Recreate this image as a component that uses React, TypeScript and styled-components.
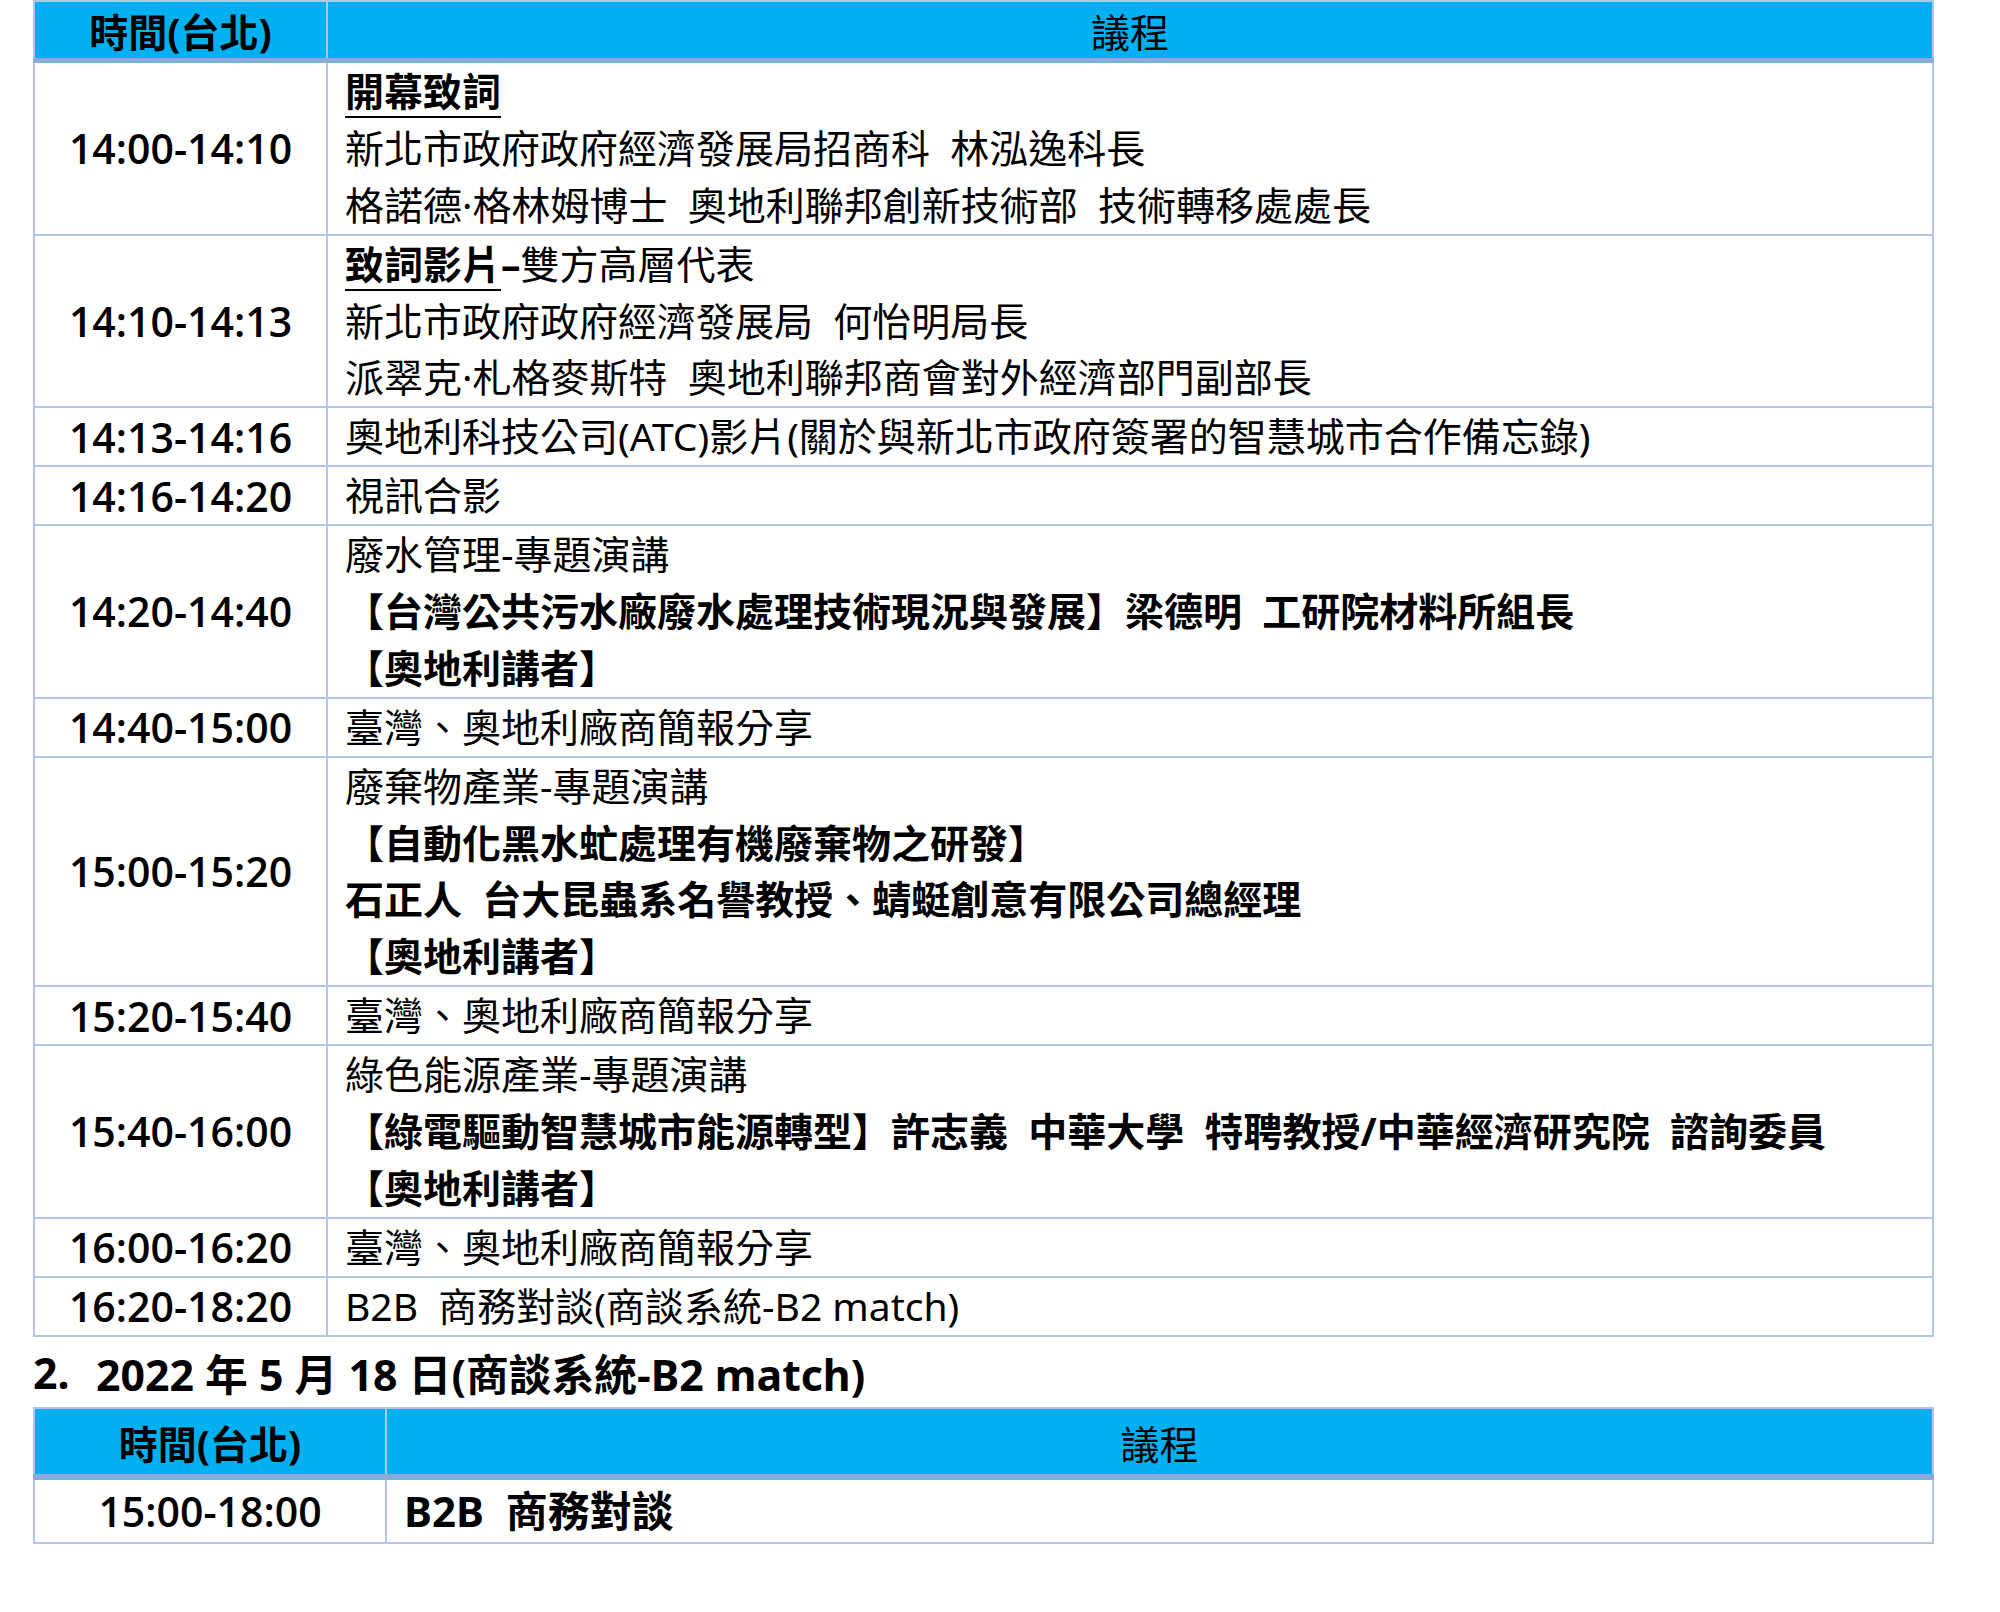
import React from 'react';
import styled, { createGlobalStyle } from 'styled-components';

const GlobalStyle = createGlobalStyle`
  html, body { margin: 0; padding: 0; background: #ffffff; }
  body {
    font-family: "Noto Sans", "Noto Sans CJK TC", sans-serif;
    color: #000000;
  }
`;

const Page = styled.div`
  padding-left: 33px;
  width: 1901px;
`;

const Table = styled.table`
  width: 1901px;
  border-collapse: collapse;
  table-layout: fixed;
`;

const HeadCell = styled.th<{ $bold?: boolean; $h: number; $bar: number }>`
  background: #00b0f0;
  border: 2px solid #b4c6e7;
  border-bottom: ${(p) => p.$bar}px solid #8eaadb;
  height: ${(p) => p.$h}px;
  padding: 4px 0 0 0;
  font-size: 39px;
  line-height: ${(p) => p.$h}px;
  font-weight: ${(p) => (p.$bold ? 700 : 400)};
  text-align: center;
  vertical-align: middle;
`;

const TimeCell = styled.td<{ $size?: number }>`
  border: 2px solid #b4c6e7;
  padding: 0;
  text-align: center;
  vertical-align: middle;
  font-family: "Open Sans", "Noto Sans", sans-serif;
  font-weight: 600;
  font-size: ${(p) => p.$size ?? 41}px;
`;

const AgendaCell = styled.td<{ $bold?: boolean; $size?: number }>`
  border: 2px solid #b4c6e7;
  padding: 0 0 0 17px;
  vertical-align: middle;
  font-size: ${(p) => p.$size ?? 39}px;
  font-weight: ${(p) => (p.$bold ? 700 : 400)};
`;

const Line = styled.div<{ $h?: number }>`
  white-space: pre;
  line-height: ${(p) => p.$h ?? 56.9}px;
  height: ${(p) => p.$h ?? 56.9}px;
`;

const Title = styled.span`
  font-weight: 700;
  text-decoration: underline;
  text-decoration-thickness: 2px;
  text-underline-offset: 10px;
`;

const Strong = styled.span`
  font-weight: 700;
`;

const Heading = styled.div`
  display: flex;
  align-items: center;
  height: 70px;
  padding-top: 2px;
  box-sizing: border-box;
  font-size: 42.8px;
  font-weight: 700;
  white-space: pre;
`;

const HeadingNum = styled.span`
  width: 63px;
`;

type Row = { time: string; lines: React.ReactNode[] };

const rows: Row[] = [
  {
    time: '14:00-14:10',
    lines: [
      <Title key="t">開幕致詞</Title>,
      '新北市政府政府經濟發展局招商科  林泓逸科長',
      '格諾德·格林姆博士  奧地利聯邦創新技術部  技術轉移處處長',
    ],
  },
  {
    time: '14:10-14:13',
    lines: [
      <>
        <Title>致詞影片</Title>
        <Strong>–</Strong>雙方高層代表
      </>,
      '新北市政府政府經濟發展局  何怡明局長',
      '派翠克·札格麥斯特  奧地利聯邦商會對外經濟部門副部長',
    ],
  },
  {
    time: '14:13-14:16',
    lines: ['奧地利科技公司(ATC)影片(關於與新北市政府簽署的智慧城市合作備忘錄)'],
  },
  { time: '14:16-14:20', lines: ['視訊合影'] },
  {
    time: '14:20-14:40',
    lines: [
      '廢水管理-專題演講',
      <Strong key="b">【台灣公共污水廠廢水處理技術現況與發展】梁德明  工研院材料所組長</Strong>,
      <Strong key="c">【奧地利講者】</Strong>,
    ],
  },
  { time: '14:40-15:00', lines: ['臺灣、奧地利廠商簡報分享'] },
  {
    time: '15:00-15:20',
    lines: [
      '廢棄物產業-專題演講',
      <Strong key="b">【自動化黑水虻處理有機廢棄物之研發】</Strong>,
      <Strong key="c">石正人  台大昆蟲系名譽教授、蜻蜓創意有限公司總經理</Strong>,
      <Strong key="d">【奧地利講者】</Strong>,
    ],
  },
  { time: '15:20-15:40', lines: ['臺灣、奧地利廠商簡報分享'] },
  {
    time: '15:40-16:00',
    lines: [
      '綠色能源產業-專題演講',
      <Strong key="b">【綠電驅動智慧城市能源轉型】許志義  中華大學  特聘教授/中華經濟研究院  諮詢委員</Strong>,
      <Strong key="c">【奧地利講者】</Strong>,
    ],
  },
  { time: '16:00-16:20', lines: ['臺灣、奧地利廠商簡報分享'] },
  { time: '16:20-18:20', lines: ['B2B  商務對談(商談系統-B2 match)'] },
];

export default function App() {
  return (
    <>
      <GlobalStyle />
      <Page>
        <Table>
          <colgroup>
            <col style={{ width: 293 }} />
            <col />
          </colgroup>
          <thead>
            <tr>
              <HeadCell $bold $h={52} $bar={5}>時間(台北)</HeadCell>
              <HeadCell $h={52} $bar={5}>議程</HeadCell>
            </tr>
          </thead>
          <tbody>
            {rows.map((r) => (
              <tr key={r.time}>
                <TimeCell>{r.time}</TimeCell>
                <AgendaCell>
                  {r.lines.map((l, i) => (
                    <Line key={i}>{l}</Line>
                  ))}
                </AgendaCell>
              </tr>
            ))}
          </tbody>
        </Table>
        <Heading>
          <HeadingNum>2.</HeadingNum>2022 年 5 月 18 日(商談系統-B2 match)
        </Heading>
        <Table>
          <colgroup>
            <col style={{ width: 352 }} />
            <col />
          </colgroup>
          <thead>
            <tr>
              <HeadCell $bold $h={61} $bar={6}>時間(台北)</HeadCell>
              <HeadCell $h={61} $bar={6}>議程</HeadCell>
            </tr>
          </thead>
          <tbody>
            <tr>
              <TimeCell>15:00-18:00</TimeCell>
              <AgendaCell $bold $size={42}>
                <Line $h={62}>B2B  商務對談</Line>
              </AgendaCell>
            </tr>
          </tbody>
        </Table>
      </Page>
    </>
  );
}
